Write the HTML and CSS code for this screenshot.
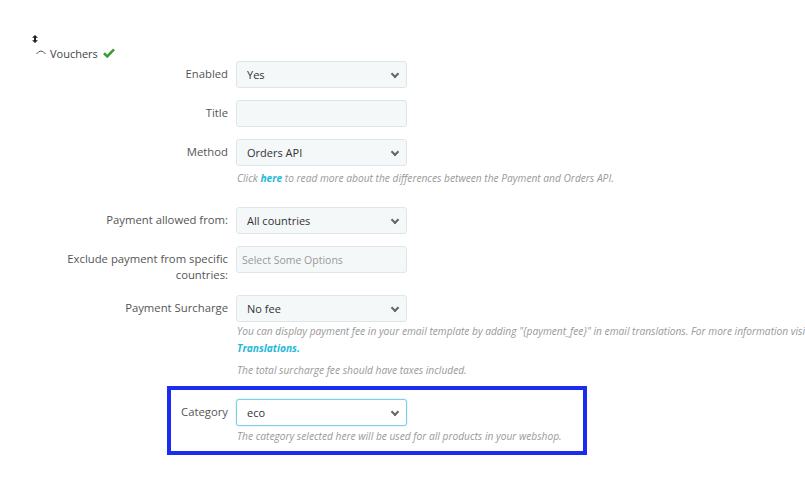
FILE: index.html
```html
<!DOCTYPE html>
<html lang="en">
<head>
  <meta charset="UTF-8">
  <meta name="viewport" content="width=device-width, initial-scale=1.0">
  <title>Vouchers</title>
  <link rel="stylesheet" href="styles.css">
</head>
<body>
  <div class="panel">
    <div class="drag-handle">
      <svg width="6" height="8" viewBox="0 0 6 8"><path d="M3 0 L6 2.8 H4 V5.2 H6 L3 8 L0 5.2 H2 V2.8 H0 Z" fill="#222"/></svg>
    </div>
    <div class="section-title">
      <svg class="arc" width="10" height="6" viewBox="0 0 10 6"><path d="M0.5 5 Q5 -1 9.5 5" fill="none" stroke="#555" stroke-width="1"/></svg>
      <span>Vouchers</span>
      <svg class="check" width="12" height="10" viewBox="0 0 12 10"><path d="M1 5.2 L4.3 8.4 L11 1.4" fill="none" stroke="#3d9b35" stroke-width="2.6"/></svg>
    </div>

    <!-- form rows -->
    <div class="form-row">
      <label class="form-label">Enabled</label>
      <div class="form-field">
        <div class="select-box">Yes<span class="chevron"></span></div>
      </div>
    </div>

    <div class="form-row">
      <label class="form-label">Title</label>
      <div class="form-field">
        <div class="input-box"></div>
      </div>
    </div>

    <div class="form-row">
      <label class="form-label">Method</label>
      <div class="form-field">
        <div class="select-box">Orders API<span class="chevron"></span></div>
        <p class="help-block">Click <a href="#">here</a> to read more about the differences between the Payment and Orders API.</p>
      </div>
    </div>

    <div class="form-row">
      <label class="form-label">Payment allowed from:</label>
      <div class="form-field">
        <div class="select-box">All countries<span class="chevron"></span></div>
      </div>
    </div>

    <div class="form-row">
      <label class="form-label">Exclude payment from specific countries:</label>
      <div class="form-field">
        <div class="input-box placeholder">Select Some Options</div>
      </div>
    </div>

    <div class="form-row">
      <label class="form-label">Payment Surcharge</label>
      <div class="form-field">
        <div class="select-box">No fee<span class="chevron"></span></div>
        <p class="help-block help-wide">You can display payment fee in your email template by adding "{payment_fee}" in email translations. For more information visit <br><a href="#">Translations.</a></p>
        <p class="help-block help-second">The total surcharge fee should have taxes included.</p>
      </div>
    </div>

    <div class="highlight">
      <div class="form-row row-category">
        <label class="form-label">Category</label>
        <div class="form-field">
          <div class="select-box focused">eco<span class="chevron"></span></div>
          <p class="help-block">The category selected here will be used for all products in your webshop.</p>
        </div>
      </div>
    </div>
  </div>
</body>
</html>
```

FILE: styles.css
```css
body, html {
  margin: 0;
  padding: 0;
  background-color: #ffffff;
  font-family: "Open Sans", "Liberation Sans", sans-serif;
  overflow: hidden;
}

.panel {
  padding: 35px 0 0 32px;
}

.drag-handle {
  height: 10px;
}

.drag-handle svg {
  display: block;
}

.section-title {
  display: flex;
  align-items: center;
  gap: 3px;
  padding-left: 4px;
  font-size: 11px;
  color: #444;
  height: 16px;
}

.section-title .arc {
  margin-right: 1px;
  margin-top: -2px;
}

.section-title .check {
  margin-left: 2px;
}

.form-row {
  display: flex;
  margin-bottom: 12px;
}

.form-label {
  box-sizing: border-box;
  width: 172px;
  padding: 5px 8px 0 0;
  margin-left: 32px;
  text-align: right;
  font-size: 11.3px;
  line-height: 16px;
  color: #555;
  flex-shrink: 0;
}

.form-field {
  flex: 1;
  min-width: 0;
  overflow: hidden;
}

.select-box, .input-box {
  box-sizing: border-box;
  width: 171px;
  height: 27px;
  border: 1px solid #dce6ea;
  border-radius: 3px;
  background-color: #f5f8f9;
  font-size: 11px;
  color: #333;
  padding: 0 10px;
  display: flex;
  align-items: center;
  position: relative;
}

.input-box.placeholder {
  color: #999;
  padding-left: 5px;
  font-size: 10.5px;
}

.chevron {
  position: absolute;
  right: 8px;
  top: 9px;
  width: 4px;
  height: 4px;
  border-right: 2px solid #666;
  border-bottom: 2px solid #666;
  transform: rotate(45deg);
}

.select-box.focused {
  background-color: #ffffff;
  border-color: #7ccfe4;
  box-shadow: 0 0 2px rgba(37, 185, 215, 0.4);
}

.help-block {
  margin: 4px 0 9px 1px;
  font-size: 10.2px;
  line-height: 16px;
  font-style: italic;
  color: #999;
  white-space: nowrap;
}

.help-block a {
  color: #25b9d7;
  font-weight: bold;
  text-decoration: none;
}

.help-wide {
  margin-top: 1px;
  margin-bottom: 0;
  line-height: 17px;
}

.help-second {
  margin-top: 5px;
  margin-bottom: 0;
}

.highlight {
  box-sizing: border-box;
  width: 420px;
  height: 69px;
  margin: -4px 0 0 135px;
  border: 4px solid #1a2cf0;
}

.row-category {
  margin: 9px 0 0 0;
}

.row-category .form-label {
  width: 65px;
  margin-left: 0;
}

.row-category .form-field {
  overflow: visible;
}

.row-category .help-block {
  margin-top: 2px;
}
```
